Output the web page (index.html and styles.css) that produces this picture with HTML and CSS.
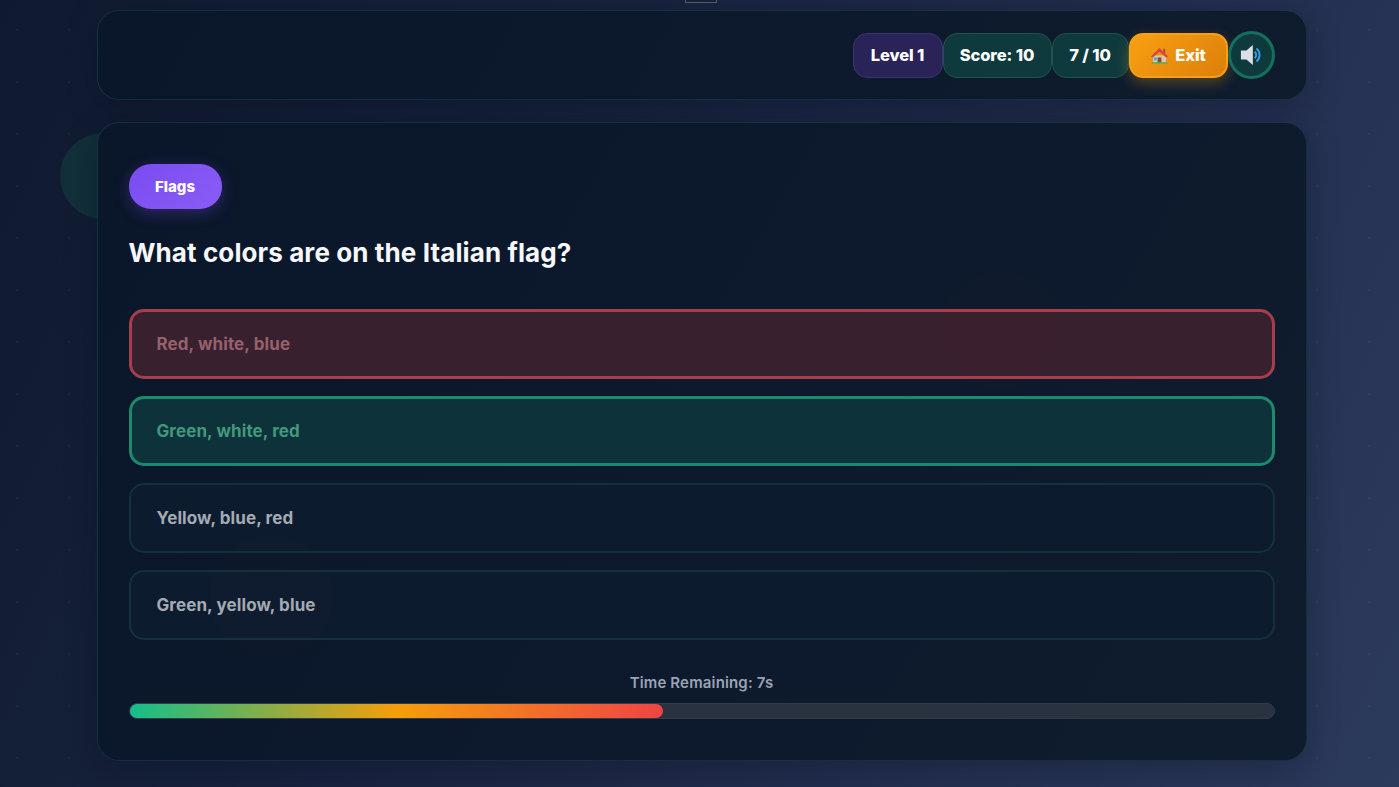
FILE: index.html

```html
<!DOCTYPE html>
<html lang="en">
<head>
  <meta charset="UTF-8" />
  <meta name="viewport" content="width=device-width, initial-scale=1.0" />
  <title>Flag Quiz</title>
  <link rel="stylesheet" href="styles.css">
</head>
<body>
  <div class="blob blob-green"></div>
  <div class="game">
    <div class="top-stub"></div>
    <header class="topbar">
      <span class="pill pill-level">Level 1</span>
      <span class="pill pill-score">Score: 10</span>
      <span class="pill pill-count">7 / 10</span>
      <button class="pill pill-exit">
        <svg class="house" viewBox="0 0 20 20" aria-hidden="true">
          <path d="M3 10h14v8H3z" fill="#d8c8b0"/>
          <path d="M1 11 10 2l9 9-2 1-7-6-7 6z" fill="#d9453c"/>
          <path d="M14 3h2v5l-2-2z" fill="#b5403a"/>
          <path d="M8 12h4v6H8z" fill="#7a5230"/>
          <path d="M4 12h3v3H4z" fill="#4fa3d8"/>
          <path d="M2 17h16v1.500H2z" fill="#5aa65a"/>
        </svg>
        Exit
      </button>
      <button class="sound">
        <svg viewBox="0 0 24 24" aria-hidden="true">
          <path d="M1 7h6l7-6v22l-7-6H1z" fill="#dcdfe6"/>
          <path d="M16 8.500a4.500 4.500 0 0 1 0 7" fill="none" stroke="#3aa0e8" stroke-width="2"/>
          <path d="M18 5a9 9 0 0 1 0 14" fill="none" stroke="#3aa0e8" stroke-width="2"/>
        </svg>
      </button>
    </header>

    <main class="card">
      <span class="category">Flags</span>
      <h2 class="question">What colors are on the Italian flag?</h2>
      <div class="options">
        <div class="option wrong">Red, white, blue</div>
        <div class="option right">Green, white, red</div>
        <div class="option">Yellow, blue, red</div>
        <div class="option">Green, yellow, blue</div>
      </div>
      <p class="timer-label">Time Remaining: 7s</p>
      <div class="timer-track">
        <div class="timer-fill" style="width: 46.600%"></div>
      </div>
      <div class="blob blob-red-top"></div>
      <div class="blob blob-red-low"></div>
    </main>
  </div>
</body>
</html>
```

FILE: styles.css

```css
* {
  box-sizing: border-box;
}
html, body {
  height: 100%;
}
body {
  margin: 0;
  position: relative;
  overflow: hidden;
  font-family: Inter, "Noto Sans", sans-serif;
  color: white;
  background-color: #1a2540;
  background-image:
    radial-gradient(rgba(150, 200, 200, 0.06) 1px, transparent 1.5px),
    linear-gradient(115deg, #0f1a30 0%, #17223d 35%, #253152 75%, #2c3a5c 100%);
  background-size: 52px 52px, 100% 100%;
  background-position: -9px 4px, 0 0;
}
.game {
  position: relative;
  width: 1210px;
  margin: 0 auto;
  left: 2px;
}
.top-stub {
  width: 32px;
  height: 3px;
  margin: 0 0 7px 588px;
  border: 1px solid #59606b;
  border-top: none;
  background: #1a2238;
}
.topbar, .card {
  background: linear-gradient(120deg, #0a162a, #0f1c2e);
  border: 1px solid rgba(45, 110, 105, 0.28);
  box-shadow: 0 8px 32px rgba(5, 10, 25, 0.3);
}
.topbar {
  height: 90px;
  border-radius: 22px;
  display: flex;
  align-items: center;
  justify-content: flex-end;
  padding: 0 31px;
  margin-bottom: 22px;
}
.pill {
  height: 45px;
  display: inline-flex;
  align-items: center;
  justify-content: center;
  border-radius: 14px;
  font: 800 16.500px Inter, sans-serif;
  letter-spacing: -0.1px;
  color: white;
  border: 1px solid;
}
.pill-level {
  width: 90px;
  background: #2a2358;
  border-color: #3c3270;
}
.pill-score {
  width: 109px;
  background: #0f3a3d;
  border-color: #1d5450;
}
.pill-count {
  width: 77px;
  background: #0f3a3d;
  border-color: #1d5450;
}
.pill-exit {
  width: 99px;
  gap: 6px;
  background: linear-gradient(135deg, #f8a012, #dc7f0b);
  border: 2px solid #f5a015;
  box-shadow: 0 5px 14px rgba(245, 158, 11, 0.3);
}
.house {
  width: 19px;
  height: 19px;
}
.sound {
  width: 47px;
  height: 48px;
  padding: 0;
  border-radius: 50%;
  background: #0f3a3d;
  border: 3px solid #14705c;
  display: flex;
  align-items: center;
  justify-content: center;
}
.sound svg {
  width: 22px;
  height: 22px;
}
.card {
  position: relative;
  height: 639px;
  border-radius: 22px;
  padding: 41px 31px 0;
  overflow: hidden;
}
.category {
  display: inline-flex;
  align-items: center;
  justify-content: center;
  width: 93px;
  height: 45px;
  border-radius: 22px;
  font-size: 15px;
  font-weight: 800;
  background: linear-gradient(135deg, #7a4cf0, #8a5cf6);
  box-shadow: 0 4px 16px rgba(124, 79, 240, 0.32);
}
.question {
  margin: 27px 0 39px;
  font-size: 26px;
  line-height: 34px;
  font-weight: 700;
  letter-spacing: 0.1px;
  color: #f6f8fb;
}
.options {
  display: flex;
  flex-direction: column;
  gap: 17px;
}
.option {
  height: 70px;
  display: flex;
  align-items: center;
  padding: 0 26px;
  border-radius: 15px;
  border: 2px solid #12303d;
  background: #0d1b2f;
  font-size: 17px;
  font-weight: 700;
  letter-spacing: 0.1px;
  color: #a3abb3;
}
.option.wrong {
  background: #38202e;
  border: 3px solid #a63e4b;
  padding: 0 25px;
  color: #95616d;
}
.option.right {
  background: #0e323a;
  border: 3px solid #1b8a6e;
  padding: 0 25px;
  color: #41987c;
}
.timer-label {
  margin: 33px 0 10px;
  text-align: center;
  font-size: 15px;
  line-height: 20px;
  font-weight: 600;
  letter-spacing: 0.15px;
  color: #9aa4b5;
}
.timer-track {
  height: 16px;
  border-radius: 8px;
  background: #2a323f;
  border: 1px solid #333b48;
}
.timer-fill {
  height: 100%;
  border-radius: 8px;
  background: linear-gradient(90deg, #14bf88 0%, #f59e0b 50%, #ef4444 100%);
}
.blob {
  position: absolute;
  border-radius: 50%;
}
.blob-green {
  left: 60px;
  top: 133px;
  width: 86px;
  height: 86px;
  background: #11303a;
}
.blob-red-top {
  left: 842px;
  top: 147px;
  width: 120px;
  height: 120px;
  background: rgba(255, 120, 120, 0.012);
}
.blob-red-low {
  left: 111px;
  top: 412px;
  width: 124px;
  height: 124px;
  background: rgba(255, 120, 120, 0.01);
}
```
